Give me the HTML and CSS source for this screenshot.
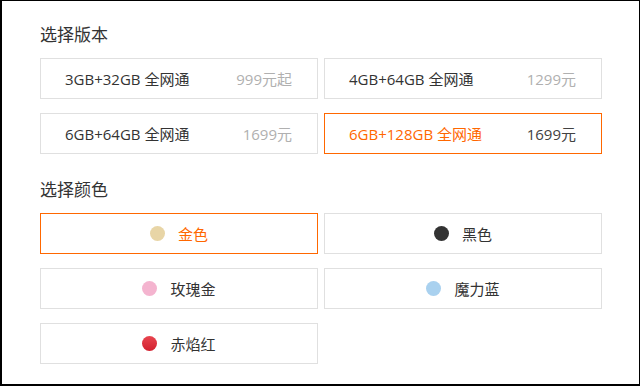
FILE: index.html
```html
<!DOCTYPE html>
<html lang="zh-CN">
<head>
<meta charset="utf-8">
<link rel="stylesheet" href="styles.css">
</head>
<body>
<div class="page">
  <section class="section">
    <h2 class="title">选择版本</h2>
    <div class="grid">
      <div class="opt ver"><span class="name">3GB+32GB 全网通</span><span class="price">999元起</span></div>
      <div class="opt ver"><span class="name">4GB+64GB 全网通</span><span class="price">1299元</span></div>
      <div class="opt ver"><span class="name">6GB+64GB 全网通</span><span class="price">1699元</span></div>
      <div class="opt ver active"><span class="name">6GB+128GB 全网通</span><span class="price">1699元</span></div>
    </div>
  </section>
  <section class="section">
    <h2 class="title">选择颜色</h2>
    <div class="grid">
      <div class="opt color active"><i class="dot gold"></i><span class="name">金色</span></div>
      <div class="opt color"><i class="dot black"></i><span class="name">黑色</span></div>
      <div class="opt color"><i class="dot pink"></i><span class="name">玫瑰金</span></div>
      <div class="opt color"><i class="dot blue"></i><span class="name">魔力蓝</span></div>
      <div class="opt color"><i class="dot red"></i><span class="name">赤焰红</span></div>
    </div>
  </section>
</div>
</body>
</html>
```
FILE: styles.css
```css
* { box-sizing: border-box; }
html, body { margin: 0; padding: 0; background: #fff; }
body {
  font-family: "Open Sans", "Noto Sans CJK SC", sans-serif;
  color: #333;
}
.page {
  width: 640px;
  height: 386px;
  border-style: solid;
  border-color: #000;
  border-width: 1px 1px 2px 2px;
  padding: 22px 0 0 38px;
}
.section + .section { margin-top: 24px; }
.title {
  margin: 0 0 11px;
  font-size: 17px;
  line-height: 24px;
  font-weight: normal;
  color: #333;
}
.grid {
  display: grid;
  grid-template-columns: 278px 278px;
  gap: 14px 6px;
}
.opt {
  height: 41px;
  border: 1px solid #e0e0e0;
  display: flex;
  align-items: center;
  font-size: 15px;
  color: #333;
}
.ver {
  justify-content: space-between;
  padding: 0 25px 0 24px;
}
.ver .price { color: #b0b0b0; }
.opt.active { border-color: #ff6700; }
.opt.active .name { color: #ff6700; }
.ver.active .price { color: #424242; }
.color { justify-content: center; }
.dot {
  width: 15px;
  height: 15px;
  border-radius: 50%;
  margin-right: 13px;
  flex: none;
}
.gold { background: #e8d5a6; }
.black { background: #333; }
.pink { background: #f4b4cf; }
.blue { background: #a9d1ef; }
.red { background: linear-gradient(#e8454f, #d2202e); }
```
